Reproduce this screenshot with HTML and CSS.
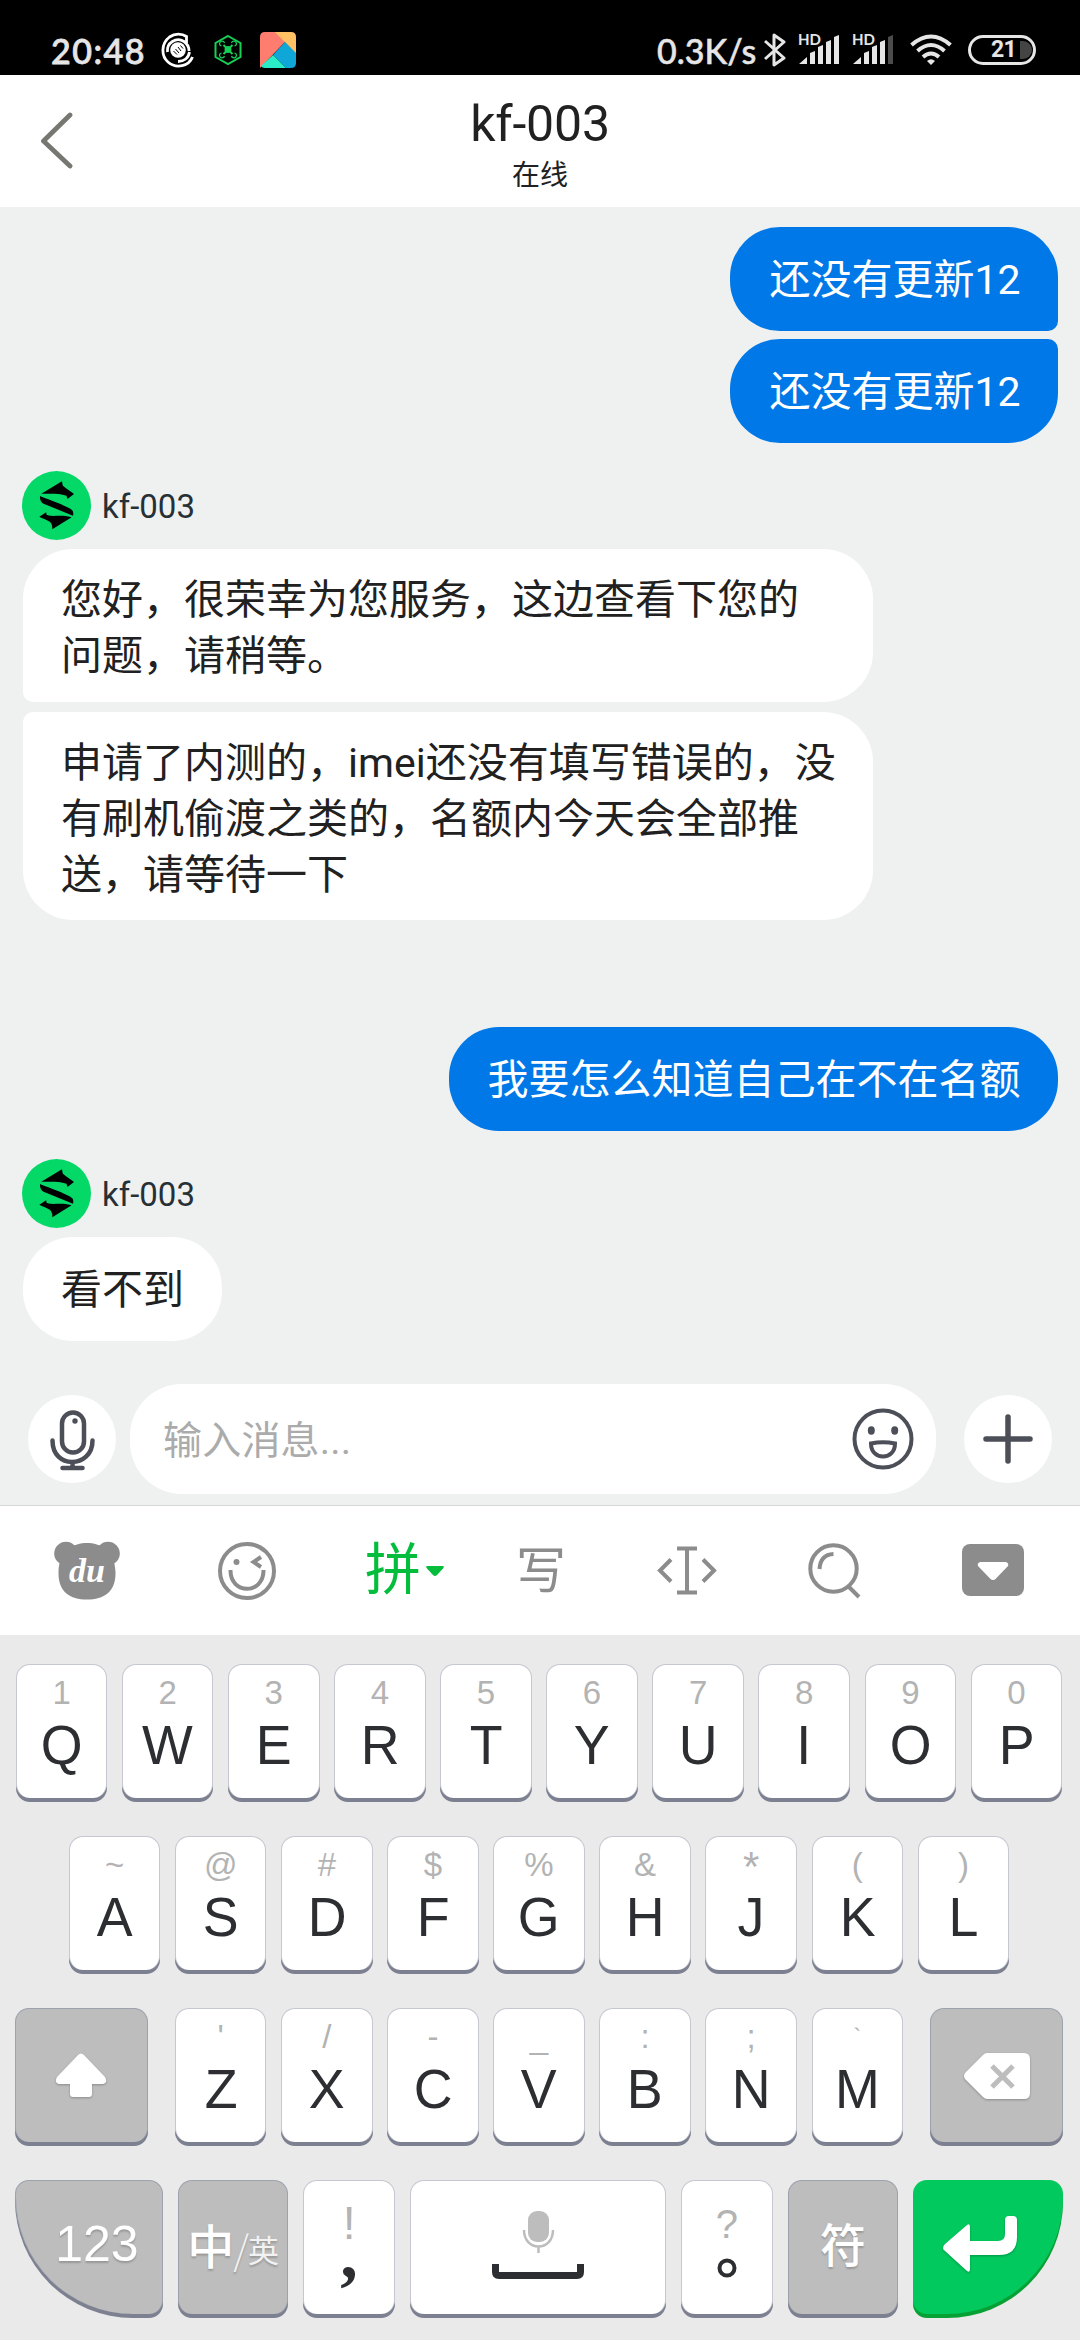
FILE: index.html
```html
<!DOCTYPE html>
<html lang="zh-CN">
<head>
<meta charset="utf-8">
<title>kf-003</title>
<link rel="stylesheet" href="styles.css">
</head>
<body>
<svg width="0" height="0" class="defs">
  <symbol id="logo" viewBox="0 0 69 69">
    <circle cx="34.5" cy="34.5" r="34.5" fill="#04d968"/>
    <path d="M19.3 22.7L40 10.3L40.7 14.5C44 18 48 19.500 52 23L45.500 28L44.500 24.800C37 22 29 23 19.300 22.700zM18 25C22 27 46 35 50 39Q52 41 51 44.700L21 32.500Q17.500 30 18 25zM17.300 45.700L24.200 41.300L24.500 43.800C31 46.500 38 43 49.600 46.300L30.300 58.300Q30.500 54 29 52C26 48.500 21 48 17.300 45.700z"/>
  </symbol>
</svg>
<div class="status">
  <span class="clock">20:48</span>
  <svg class="s-ring" width="34" height="36" viewBox="0 0 34 36" fill="none" stroke="#fff" stroke-width="2.800">
    <path d="M25.500 11V4.500C21 1.500 14 1 8.500 5C0 11.500 0 24 7 30C15.500 37.500 28 34 31.500 25"/>
    <path d="M6.500 20A10.800 10.800 0 0 1 23 9.500Q28 13 28 19M17 29.500C23 29.500 27.500 26 28.500 20"/>
    <circle cx="17" cy="18" r="7.800" fill="#fff" stroke="none"/><path d="M12.500 19l3.500 3.500M14.500 17l3.500 4M17 15l3 4M19.500 13.500l2.500 3" stroke="#000" stroke-width="1"/>
  </svg>
  <svg class="s-hex" width="30" height="34" viewBox="0 0 30 34" fill="none" stroke="#16cf55" stroke-width="2">
    <path d="M15 3L27.500 10V24L15 31L2.500 24V10z"/>
    <path d="M10.500 12l9 9M19.500 12L10.500 21"/><circle cx="15" cy="16.500" r="2.500" fill="#16cf55"/>
    <path d="M8.500 13a2.500 2.500 0 1 1 3-3M21.500 13a2.500 2.500 0 1 0-3-3M8.500 20a2.500 2.500 0 1 0 3 3M21.500 20a2.500 2.500 0 1 1-3 3" stroke-width="1.200"/>
  </svg>
  <svg class="s-app" width="36" height="36" viewBox="0 0 36 36">
    <path fill="#ff7d6e" d="M5 0H16L25 10L0 36V5Q0 0 5 0z"/><path fill="#ffc164" d="M15 0H31Q36 0 36 5V22z"/>
    <path fill="#0ea7d8" d="M25 10L36 21V31Q36 36 31 36H26L13 23z"/><path fill="#2aecc6" d="M13 23L26 36H5Q2 36 1 34z"/>
  </svg>
  <span class="speed">0.3K/s</span>
  <svg class="s-bt" width="22" height="36" viewBox="0 0 22 36" fill="none" stroke="#e6e6e6" stroke-width="3" stroke-linejoin="round"><path d="M1 9L20 26L10 33V3L20 10L1 27"/></svg>
  <div class="signal"><span>HD</span>
    <svg width="41" height="30" viewBox="0 0 41 30" fill="#e6e6e6"><path d="M0 29L8 22V29zM11 18L16 16V29H11zM19 12L24 10V29H19zM27 7L32 5V29H27zM35 2L40 0V29H35z"/></svg></div>
  <div class="signal two"><span>HD</span>
    <svg width="41" height="30" viewBox="0 0 41 30" fill="#e6e6e6"><path d="M0 29L8 22V29zM11 18L16 16V29H11zM19 12L24 10V29H19zM27 7L32 5V29H27z"/><path fill="#4c4c4c" d="M35 2L40 0V29H35z"/></svg></div>
  <svg class="s-wifi" width="42" height="32" viewBox="0 0 42 32" fill="none" stroke="#e6e6e6" stroke-width="4"><path d="M1.500 11Q21-6 40.500 11M7.500 17Q21 5 34.500 17M13 23Q21 16 29 23"/><path d="M17 27Q21 23.500 25 27L21 31z" fill="#e6e6e6" stroke="none"/></svg>
  <div class="battery"><span>21</span><i></i></div>
</div>

<header class="header">
  <svg width="34" height="60" viewBox="0 0 34 60" fill="none" stroke="#777772" stroke-width="4.800" stroke-linecap="round" stroke-linejoin="round"><path d="M29 5L2.500 31L29 56"/></svg>
  <div class="heading"><div class="title">kf-003</div><div class="sub">在线</div></div>
</header>

<main class="chat">
  <div class="msg me first">还没有更新12</div>
  <div class="msg me last">还没有更新12</div>
  <div class="agent"><svg width="69" height="69"><use href="#logo"/></svg><span>kf-003</span></div>
  <div class="msg them multi first">您好，很荣幸为您服务，这边查看下您的<br>问题，请稍等。</div>
  <div class="msg them multi last">申请了内测的，imei还没有填写错误的，没<br>有刷机偷渡之类的，名额内今天会全部推<br>送，请等待一下</div>
  <div class="msg me solo">我要怎么知道自己在不在名额</div>
  <div class="agent"><svg width="69" height="69"><use href="#logo"/></svg><span>kf-003</span></div>
  <div class="msg them">看不到</div>
</main>

<div class="composer">
  <div class="round"><svg width="88" height="88" viewBox="0 0 88 88" fill="none" stroke="#4d4f58" stroke-width="4.500" stroke-linecap="round"><rect x="34" y="17.500" width="22" height="40" rx="11"/><path d="M24.500 45.500C24.500 60 34 67 44 67S64.500 60 64.500 45.500M44.500 67V73M34.500 73H54.500"/><circle cx="47" cy="26" r="2.700" fill="#4d4f58" stroke="none"/></svg></div>
  <div class="field"><span>输入消息...</span>
    <svg width="62" height="62" viewBox="0 0 62 62" fill="none" stroke="#4d4f58" stroke-width="4"><circle cx="31" cy="31" r="28.500"/><ellipse cx="19.300" cy="22.500" rx="3.500" ry="4.200" fill="#4d4f58" stroke="none"/><ellipse cx="42.700" cy="22.500" rx="3.500" ry="4.200" fill="#4d4f58" stroke="none"/><path d="M19 35.500Q31 33 43 35.500C43 44 37.500 48.500 31 48.500S19 44 19 35.500z"/></svg></div>
  <div class="round"><svg width="88" height="88" viewBox="0 0 88 88" stroke="#4d4f58" stroke-width="5.500" stroke-linecap="round"><path d="M44 22V66M22 44H66"/></svg></div>
</div>

<nav class="tools">
  <svg class="t-bear" width="66" height="60" viewBox="0 0 66 60"><g fill="#8c8c8c"><circle cx="12" cy="12.500" r="11.800"/><circle cx="54" cy="12.500" r="11.800"/><path d="M33 2C46 2 61 9 61.500 31C62 51 50 58.500 33 58.500S4 51 4.500 31C5 9 20 2 33 2z"/></g><text x="33" y="41" text-anchor="middle" class="du">du</text></svg>
  <svg class="t-wink" width="60" height="60" viewBox="0 0 60 60" fill="none" stroke="#8c8c8c" stroke-width="4"><circle cx="30" cy="30" r="27"/><path d="M13.500 29C13 54 47 54 46.500 29M44 16L36.500 21L44 26"/><circle cx="19.500" cy="21" r="3" fill="#8c8c8c" stroke="none"/></svg>
  <span class="t-pin">拼</span>
  <svg class="t-tri" width="18" height="11" viewBox="0 0 18 11"><path fill="#04bd3c" d="M1.500 0H16.500Q19 0 17 2.500L11 9Q9 11 7 9L1 2.500Q-1 0 1.500 0z"/></svg>
  <span class="t-write">写</span>
  <svg class="t-cursor" width="60" height="50" viewBox="0 0 60 50" fill="none" stroke="#8c8c8c" stroke-width="4"><path d="M20 2.500H40M30 2.500V46.500M20 46.500H40M14 13.500L3 24.500L14 35.500M46 13.500L57 24.500L46 35.500"/></svg>
  <svg class="t-find" width="54" height="56" viewBox="0 0 54 56" fill="none" stroke="#8c8c8c" stroke-width="4"><circle cx="25.500" cy="25.500" r="23.200"/><path d="M40 43L51 54M11.500 26Q12.500 11.500 25.500 11"/></svg>
  <svg class="t-down" width="62" height="52" viewBox="0 0 62 52"><rect width="62" height="52" rx="8" fill="#8c8c8c"/><path fill="#fff" d="M18 18H44Q47 19 46 22L34 34.500Q31 37.500 28 34.500L16 22Q15 19 18 18z"/></svg>
</nav>

<section class="keyboard">
  <div class="row">
    <div class="key"><i>1</i><b>Q</b></div><div class="key"><i>2</i><b>W</b></div><div class="key"><i>3</i><b>E</b></div><div class="key"><i>4</i><b>R</b></div><div class="key"><i>5</i><b>T</b></div><div class="key"><i>6</i><b>Y</b></div><div class="key"><i>7</i><b>U</b></div><div class="key"><i>8</i><b>I</b></div><div class="key"><i>9</i><b>O</b></div><div class="key"><i>0</i><b>P</b></div>
  </div>
  <div class="row">
    <div class="key"><i>~</i><b>A</b></div><div class="key"><i>@</i><b>S</b></div><div class="key"><i>#</i><b>D</b></div><div class="key"><i>$</i><b>F</b></div><div class="key"><i>%</i><b>G</b></div><div class="key"><i>&amp;</i><b>H</b></div><div class="key"><i class="star">*</i><b>J</b></div><div class="key"><i>(</i><b>K</b></div><div class="key"><i>)</i><b>L</b></div>
  </div>
  <div class="row">
    <div class="key gray shift"><svg width="54" height="48" viewBox="0 0 54 48"><path fill="#fff" d="M24 3Q27 0 30 3L51 25Q54 31 49 32H38V42Q38 45 35 45H19Q16 45 16 42V32H5Q0 31 3 25z"/></svg></div>
    <div class="key"><i>'</i><b>Z</b></div><div class="key"><i>/</i><b>X</b></div><div class="key"><i>-</i><b>C</b></div><div class="key"><i>_</i><b>V</b></div><div class="key"><i>:</i><b>B</b></div><div class="key"><i>;</i><b>N</b></div><div class="key"><i class="tick">`</i><b>M</b></div>
    <div class="key gray back"><svg width="66" height="48" viewBox="0 0 66 48"><path fill="#fff" d="M23 1H60Q66 1 66 7V41Q66 47 60 47H23Q21 47 19 45L1 27Q-1 24 1 21L19 3Q21 1 23 1z"/><path d="M28 14L49 35M49 14L28 35" stroke="#bdbdbd" stroke-width="5"/></svg></div>
  </div>
  <div class="row bottom">
    <div class="key gray num"><span>123</span></div>
    <div class="key gray lang"><span>中</span><small class="slash">/</small><small>英</small></div>
    <div class="key punct"><i>!</i><b class="comma">,</b></div>
    <div class="key space"><svg width="92" height="70" viewBox="0 0 92 70" fill="none"><rect x="36" y="0" width="21" height="31" rx="9" fill="#bdbdbd"/><path d="M32 19C32 41 61 41 61 19M46.500 35V42" stroke="#bdbdbd" stroke-width="2.500"/><path d="M3.500 53V61Q3.500 64.500 7 64.500H85Q88.500 64.500 88.500 61V53" stroke="#2d2e32" stroke-width="7"/></svg></div>
    <div class="key punct"><i class="ask">?</i><svg width="20" height="20" viewBox="0 0 20 20"><circle cx="10" cy="10" r="7.500" fill="none" stroke="#2d2e32" stroke-width="4"/></svg></div>
    <div class="key gray sym"><span>符</span></div>
    <div class="key enter"><svg width="76" height="58" viewBox="0 0 76 58"><path fill="#fff" d="M0 33Q0 31 2 29L24 10Q27 8 27 12V26H55Q62 26 62 19V5Q62 1 66 1H70Q74 1 74 5V22Q74 40 56 40H27V54Q27 58 24 56L2 36Q0 35 0 33z"/></svg></div>
  </div>
</section>
</body>
</html>
```
FILE: styles.css
```css
* { box-sizing: border-box; }
body { margin: 0; width: 1080px; height: 2340px; overflow: hidden; display: flex; flex-direction: column; background: #eff1f1; font-family: Roboto, "Noto Sans CJK SC", sans-serif; color: #212121; }
.defs { position: absolute; }
svg { display: block; flex: none; }

.status { height: 75px; flex: none; background: #000; display: flex; align-items: flex-start; color: #e6e6e6; font-family: Lato, sans-serif; font-weight: 500; padding-left: 51px; white-space: nowrap; }
.clock, .speed { font-size: 34px; line-height: 40px; margin-top: 31px; }
.clock { width: 93px; letter-spacing: 1.5px; -webkit-text-stroke: 0.8px #e6e6e6; }
.s-ring { margin: 32px 0 0 17px; }
.s-hex { margin: 33px 0 0 18px; }
.s-app { margin: 32px 0 0 17px; }
.speed { margin-left: 361px; width: 99px; -webkit-text-stroke: 0.5px #e6e6e6; }
.s-bt { margin: 32px 0 0 8px; }
.signal { position: relative; margin: 35px 0 0 13px; }
.signal span { position: absolute; left: -1px; top: -3px; font: 700 15px/15px Lato, sans-serif; }
.s-wifi { margin: 34px 0 0 16px; }
.battery { width: 68px; height: 30px; margin: 35px 0 0 16px; border: 3px solid #e6e6e6; border-radius: 15px; display: flex; align-items: center; padding-left: 20px; font: 700 23px/24px Roboto, sans-serif; letter-spacing: -0.8px; }
.battery i { width: 12px; height: 18px; margin-left: 4px; background: #444; border-radius: 0 9px 9px 0; }

.header { height: 132px; flex: none; background: #fff; display: grid; grid-template-columns: 72px 1fr 111px; }
.header svg { margin: 35px 0 0 41px; }
.heading { text-align: center; padding-left: 39px; }
.title { font-size: 50px; line-height: 60px; margin-top: 19px; letter-spacing: -0.2px; }
.sub { font-size: 28px; line-height: 36px; margin-top: 4px; }

.chat { height: 1177px; flex: none; display: flex; flex-direction: column; align-items: flex-start; padding: 20px 22px 0 23px; }
.msg { font-size: 41px; line-height: 56px; padding: 25px 37.5px 23px 38px; height: 104px; border-radius: 50px; white-space: nowrap; }
.me { align-self: flex-end; background: #0078e7; color: #fff; padding-left: 39px; }
.them { background: #fff; }
.me.first { border-bottom-right-radius: 10px; }
.me.last { border-top-right-radius: 10px; margin-top: 8px; }
.multi { width: 850px; padding: 23px 38px 17px; }
.them.first { height: 153px; border-bottom-left-radius: 10px; }
.them.last { height: 208px; border-top-left-radius: 10px; margin-top: 10px; }
.solo { margin-top: 107px; }
.agent { display: flex; align-items: center; margin: 28px 0 9px -1px; gap: 11px; font-size: 33px; color: #263035; }
.agent span { padding-top: 2px; }

.composer { height: 121px; flex: none; display: flex; align-items: center; padding: 0 28px 11px; }
.round { width: 88px; height: 88px; border-radius: 50%; background: #fff; flex: none; }
.field { width: 806px; height: 110px; margin: 0 28px 0 14px; border-radius: 52px; background: #fff; display: flex; align-items: center; justify-content: space-between; padding: 0 22px 0 33px; font-size: 39px; color: #ababab; }
.field span { padding-bottom: 4px; letter-spacing: 0.2px; }

.tools { height: 130px; flex: none; background: #fff; border-top: 1px solid #d5d7d7; display: flex; align-items: flex-start; }
.t-bear { margin: 35px 0 0 54px; }
.du { font: italic 700 34px "Liberation Serif", serif; fill: #fff; }
.t-wink { margin: 35px 0 0 97px; }
.t-pin { font-size: 56px; line-height: 64px; color: #04bd3c; margin: 32px 0 0 88px; width: 56px; }
.t-tri { margin: 60px 0 0 5px; }
.t-write { font-size: 50px; line-height: 60px; color: #8c8c8c; margin: 35px 0 0 72px; width: 50px; }
.t-cursor { margin: 40px 0 0 91px; }
.t-find { margin: 37px 0 0 91px; }
.t-down { margin: 38px 0 0 100px; }

.keyboard { flex: 1; background: #eaeaea; padding-top: 29px; display: flex; flex-direction: column; gap: 38px; font-family: "Liberation Sans", sans-serif; }
.row { height: 134px; display: flex; justify-content: center; gap: 14.6px; padding-right: 2px; }
.key { width: 91.5px; height: 134px; flex: none; background: #fff; border: 1px solid #c6c8d1; border-bottom: 0; border-radius: 14px; box-shadow: 0 4px 0 #7c8090; display: flex; flex-direction: column; align-items: center; padding-top: 8px; color: #2d2e32; }
.key i { font-style: normal; font-size: 33px; line-height: 40px; height: 40px; color: #b3b3b3; }
.key b { font-weight: 400; font-size: 56px; line-height: 64px; height: 64px; transform: scaleX(0.96); }
.key i.star { font-size: 42px; line-height: 44px; }
.key i.tick { font-size: 24px; }
.gray, .enter { background: #bdbdbd; border-color: #9da2ae; justify-content: center; padding-top: 0; color: #fff; text-shadow: 0 2px 2px #0003; }
.gray svg, .enter svg { filter: drop-shadow(0 1px 1px #0004); }
.shift { width: 133px; margin-right: 12.5px; }
.back { width: 133px; margin-left: 12.5px; }
.num { width: 148px; border-radius: 14px 14px 14px 118px / 14px 14px 14px 118px; font-size: 50px; padding: 0 0 8px 16px; }
.lang { width: 110px; flex-direction: row; align-items: center; font-family: "Noto Sans CJK SC", sans-serif; font-size: 47px; }
.lang span { font-weight: 500; line-height: 60px; margin-bottom: 8px; }
.lang small { font-size: 31px; color: #f2f2f2; margin-top: 2px; }
.lang .slash { font-size: 40px; font-weight: 300; margin: 0 -1px; }
.punct { padding-top: 22px; }
.punct i { font-size: 46px; line-height: 40px; }
.punct i.ask { font-size: 40px; line-height: 42px; }
.punct svg { margin-top: 15px; }
.punct b.comma { font: 700 70px/34px "Liberation Serif", serif; height: 34px; margin-top: -6px; transform: none; }
.space { width: 256px; padding-top: 30px; }
.sym { width: 110px; font-family: "Noto Sans CJK SC", sans-serif; font-weight: 500; font-size: 46px; padding-bottom: 12px; }
.enter { width: 150px; border: 0; background: #02c95e; box-shadow: 0 4px 0 #06a035; border-radius: 14px 14px 116px 14px / 14px 14px 116px 14px; padding: 0 14px 6px 0; margin-right: -2px; }
.bottom { gap: 15.2px; padding-right: 4px; }
```
